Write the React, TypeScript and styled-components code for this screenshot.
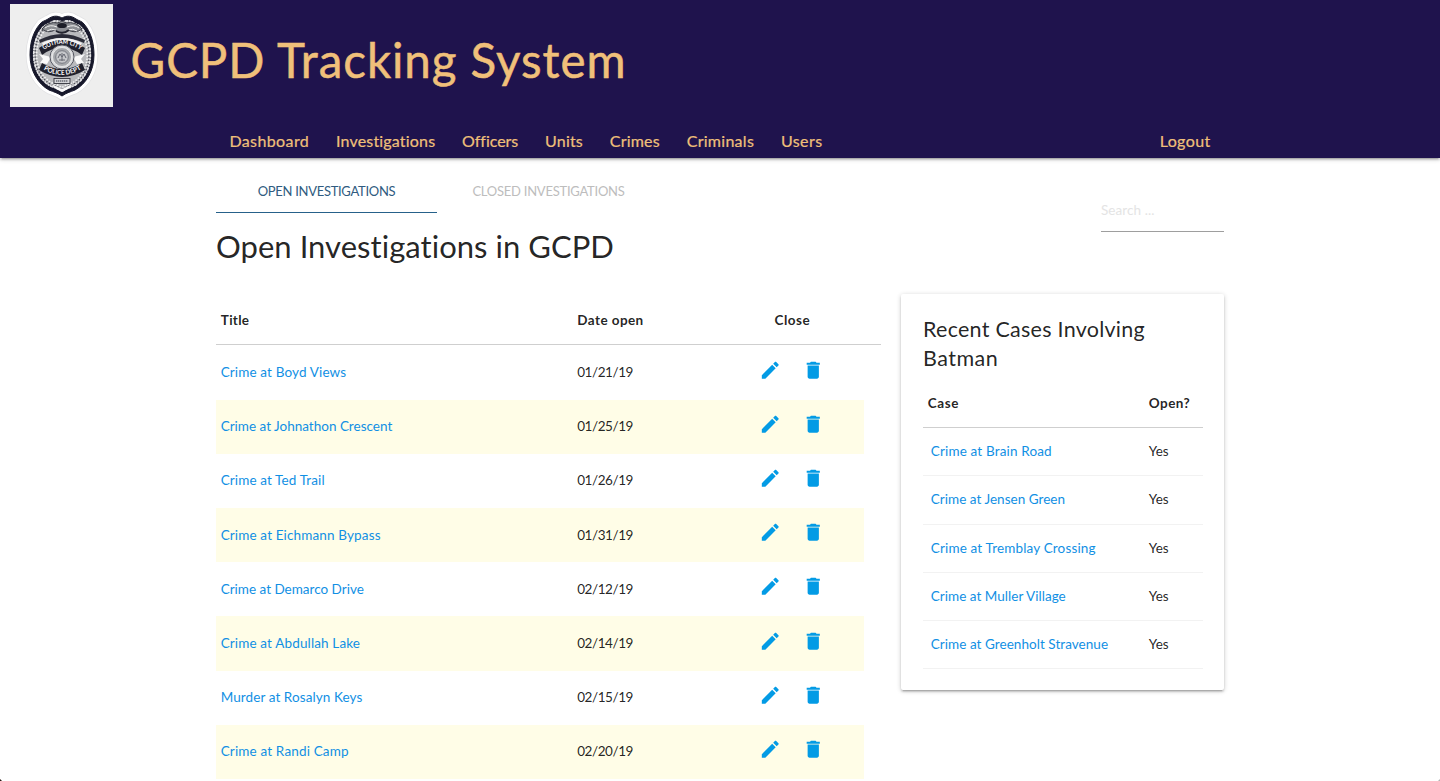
import React from 'react';
import styled, { createGlobalStyle } from 'styled-components';

const GlobalStyle = createGlobalStyle`
  *, *::before, *::after { box-sizing: border-box; }
  html, body { margin: 0; padding: 0; }
  body {
    height: 781px;
    overflow: hidden;
    background: #fff;
    color: rgba(0, 0, 0, 0.87);
    font-family: Lato, "Open Sans", sans-serif;
    font-size: 13.5px;
    line-height: 1.5;
  }
  a { text-decoration: none; }
  h1, h2, h3 { margin: 0; font-weight: 400; }
`;

const Page = styled.div`
  height: 781px;
  overflow: hidden;
`;

/* Header */

const Header = styled.header`
  height: 158px;
  display: flex;
  flex-direction: column;
  justify-content: space-between;
  background: #1f134d;
  color: #f0c07a;
  box-shadow: 0 2px 2px 0 rgba(0, 0, 0, 0.14), 0 3px 1px -2px rgba(0, 0, 0, 0.12),
    0 1px 5px 0 rgba(0, 0, 0, 0.2);
`;

const Brand = styled.div`
  display: flex;
  padding: 4px 0 0 10px;
`;

const Emblem = styled.svg`
  display: block;
  width: 103px;
  height: 103px;
  flex: none;
`;

const SiteTitle = styled.h1`
  margin: 21px 0 0 17.5px;
  font-size: 47.5px;
  line-height: 70px;
  letter-spacing: 0.95px;
  white-space: nowrap;
  -webkit-text-stroke: 0.5px currentColor;
`;

const Container = styled.div`
  width: 1008px;
  margin: 0 auto;
`;

const NavBar = styled(Container).attrs({ as: 'nav' })`
  display: flex;
  justify-content: space-between;
  height: 34px;
`;

const NavList = styled.div`
  display: flex;
`;

const NavLink = styled.a<{ $track: number }>`
  padding: 0 13.4px;
  color: inherit;
  font-size: 16px;
  line-height: 33px;
  letter-spacing: ${(p) => p.$track}px;
  -webkit-text-stroke: 0.2px currentColor;
`;

/* Heading area */

const TopArea = styled(Container)`
  display: flex;
  justify-content: space-between;
  height: 135px;
`;

const Tabs = styled.div`
  display: flex;
  height: 55px;
`;

const Tab = styled.a<{ $active?: boolean; $track: number }>`
  width: ${(p) => (p.$active ? 221 : 223)}px;
  padding-top: 12px;
  border-bottom: 1px solid ${(p) => (p.$active ? '#26618a' : 'transparent')};
  color: ${(p) => (p.$active ? '#2f5b80' : '#bdbdbd')};
  font-size: 13px;
  line-height: 42px;
  letter-spacing: ${(p) => p.$track}px;
  text-align: center;
`;

const PageTitle = styled.h2`
  margin-top: 10px;
  font-size: 31px;
  line-height: 46px;
  letter-spacing: 0.03px;
`;

const SearchField = styled.label`
  width: 123px;
  height: 74px;
  padding-top: 31px;
  border-bottom: 1px solid #9e9e9e;
`;

const SearchInput = styled.input`
  display: block;
  width: 100%;
  height: 42px;
  padding: 0;
  border: 0;
  outline: 0;
  background: transparent;
  font: 13.5px Lato, sans-serif;
  letter-spacing: 0.07px;
  &::placeholder { color: #e4e4e4; opacity: 1; }
`;

/* Investigations table */

const Content = styled(Container)`
  display: flex;
  align-items: flex-start;
  justify-content: space-between;
`;

const CaseTable = styled.section`
  width: 665px;
`;

const CaseHead = styled.div`
  display: grid;
  grid-template-columns: 356.5px 182px 1fr;
  height: 52px;
  padding-top: 3px;
  border-bottom: 1px solid #cfcfcf;
`;

const HeadCell = styled.div<{ $track: number; $indent?: number; $drop?: number }>`
  padding-top: ${(p) => p.$drop ?? 0}px;
  padding-left: ${(p) => p.$indent ?? 4.8}px;
  font-weight: 700;
  line-height: 49px;
  letter-spacing: ${(p) => p.$track}px;
`;

const CaseRows = styled.div`
  padding-top: 0.6px;
`;

const CaseRow = styled.div`
  display: grid;
  grid-template-columns: 356.5px 182px 1fr;
  width: 648px;
  height: 54.17px;
  line-height: 53px;
  &:nth-child(even) { background: #fffde7; }
`;

const Cell = styled.div<{ $indent?: number }>`
  padding-left: ${(p) => p.$indent ?? 4.7}px;
  ${CaseRow} > & { padding-top: 0.44px; }
`;

const DateCell = styled(Cell)`
  letter-spacing: -0.42px;
`;

const CaseLink = styled.a<{ $track: number }>`
  color: #1190e4;
  letter-spacing: ${(p) => p.$track + 0.03}px;
`;

const Actions = styled.div`
  display: flex;
  gap: 20px;
  padding: 13.15px 0 0 4.5px;
`;

const Icon = styled.svg`
  display: block;
  width: 22.5px;
  height: 22.5px;
  fill: #039be5;
`;

/* Recent cases card */

const Card = styled.aside`
  width: 323px;
  height: 396px;
  margin-top: 1px;
  padding: 21px 21px 0 22px;
  border-radius: 2px;
  background: #fff;
  box-shadow: 0 2px 2px 0 rgba(0, 0, 0, 0.14), 0 3px 1px -2px rgba(0, 0, 0, 0.12),
    0 1px 5px 0 rgba(0, 0, 0, 0.2);
`;

const CardTitle = styled.h3`
  font-size: 21.5px;
  line-height: 29px;
`;

const TitleLine = styled.span<{ $track: number }>`
  display: block;
  letter-spacing: ${(p) => p.$track}px;
`;

const RecentHead = styled.div`
  display: grid;
  grid-template-columns: 221px 1fr;
  height: 55px;
  border-bottom: 1px solid #cfcfcf;
`;

const RecentRow = styled.div`
  display: grid;
  grid-template-columns: 221px 1fr;
  height: 48.25px;
  border-bottom: 1px solid #f2f2f2;
  line-height: 47px;
`;

const WindowCorner = styled.span<{ $right?: boolean }>`
  position: absolute;
  top: 778px;
  ${(p) => (p.$right ? 'right: 0;' : 'left: 0;')}
  width: 3px;
  height: 3px;
  background: radial-gradient(
    circle at ${(p) => (p.$right ? '0 0' : '100% 0')},
    transparent 2.6px,
    ${(p) => (p.$right ? '#b5b5b5' : '#2a1712')} 3.2px
  );
`;

const navItems = [
  { label: 'Dashboard', track: 0.4 },
  { label: 'Investigations', track: 0.176 },
  { label: 'Officers', track: -0.03 },
  { label: 'Units', track: 0.2 },
  { label: 'Crimes', track: 0.22 },
  { label: 'Criminals', track: 0.275 },
  { label: 'Users', track: 0.45 },
];

const investigations = [
  { title: 'Crime at Boyd Views', date: '01/21/19', track: 0.11 },
  { title: 'Crime at Johnathon Crescent', date: '01/25/19', track: -0.028 },
  { title: 'Crime at Ted Trail', date: '01/26/19', track: 0.091 },
  { title: 'Crime at Eichmann Bypass', date: '01/31/19', track: 0.113 },
  { title: 'Crime at Demarco Drive', date: '02/12/19', track: -0.03 },
  { title: 'Crime at Abdullah Lake', date: '02/14/19', track: 0.11 },
  { title: 'Murder at Rosalyn Keys', date: '02/15/19', track: 0.06 },
  { title: 'Crime at Randi Camp', date: '02/20/19', track: 0.13 },
];

const recentCases = [
  { title: 'Crime at Brain Road', track: 0.13 },
  { title: 'Crime at Jensen Green', track: 0 },
  { title: 'Crime at Tremblay Crossing', track: 0.127 },
  { title: 'Crime at Muller Village', track: 0 },
  { title: 'Crime at Greenholt Stravenue', track: 0.02 },
];

const EditIcon = () => (
  <Icon viewBox="0 0 24 24">
    <path d="M3 17.25V21h3.75L17.81 9.94l-3.75-3.75L3 17.25zM20.71 7.04c.39-.39.39-1.02 0-1.41l-2.34-2.34c-.39-.39-1.02-.39-1.41 0l-1.83 1.83 3.75 3.75 1.83-1.83z" />
  </Icon>
);

const DeleteIcon = () => (
  <Icon viewBox="0 0 24 24">
    <path d="M6 19c0 1.1.9 2 2 2h8c1.1 0 2-.9 2-2V7H6v12zM19 4h-3.5l-1-1h-5l-1 1H5v2h14V4z" />
  </Icon>
);

const shield =
  'M53 14C48 11 43 12 39 15C36 17 33 17 31 20C24 28 21 39 21 51C21 67 29 80 40 86C45 88 49 89 53 92C57 89 61 88 66 86C77 80 85 67 85 51C85 39 82 28 75 20C73 17 70 17 67 15C63 12 58 11 53 14Z';

const Badge = () => (
  <Emblem viewBox="0 0 103 103" role="img" aria-label="Gotham City Police Dept badge">
    <defs>
      <path id="arcTop" d="M33 46.5Q52 33 71 46.5" />
      <path id="arcBottom" d="M32.5 65Q52 77 71.5 65" />
    </defs>
    <rect width="103" height="103" fill="#eeeeee" />
    <g transform="translate(-1 0)">
      <path d={shield} fill="#e2e2e4" stroke="#e2e2e4" strokeWidth="8.5" strokeLinejoin="round" />
      <path d={shield} fill="#fff" stroke="#fff" strokeWidth="7" strokeLinejoin="round" />
      <path d={shield} fill="#17182b" stroke="#17182b" strokeWidth="1" />
      <path d={shield} transform="translate(5.3 5.2) scale(.9)" fill="#b9babd" />
      <path
        d={shield}
        transform="translate(6.4 6.2) scale(.88)"
        fill="none"
        stroke="#e6e6e8"
        strokeWidth="2.2"
        strokeDasharray="3.4 1.1 1.8 1.3"
      />
      <path
        d={shield}
        transform="translate(8.5 8.3) scale(.84)"
        fill="none"
        stroke="#50515a"
        strokeWidth="1.8"
        strokeDasharray="1.5 2.2"
      />
      <path
        d={shield}
        transform="translate(11.1 10.9) scale(.79)"
        fill="none"
        stroke="#f3f3f3"
        strokeWidth="2"
        strokeDasharray="2 1.8"
      />
      {/* eagle */}
      <path d="M33 25Q39 17 49 19L53 17L57 19Q67 17 73 25Q66 30 59 26Q53 32 46 26Q39 30 33 25Z" fill="#8d8f94" stroke="#33343d" strokeWidth=".9" />
      <path d="M36 24Q41 20 48 23M70 24Q65 20 58 23M38 27Q42 24 47 26M68 27Q64 24 59 26" fill="none" stroke="#eee" strokeWidth="1" />
      <ellipse cx="53" cy="21.5" rx="4.8" ry="2.6" fill="#1c1d27" />
      <path d="M47 27Q54 31 60 26" fill="none" stroke="#24252f" strokeWidth="1.8" />
      {/* ribbon under the eagle */}
      <path d="M30 36Q53 24 76 36L75 39Q53 29 31 39Z" fill="#2b2c38" />
      <path d="M33 39Q53 29 73 39L71 42Q53 34 35 42Z" fill="#f3f3f3" />
      {/* banners */}
      <path d="M30 44Q53 28 76 44L73 51Q53 36 33 51Z" fill="#20212d" />
      <path d="M30 50L42 53L38 60L31 59L34 55Z M76 50L64 53L68 60L75 59L72 55Z" fill="#fafafa" />
      <path d="M33 59Q53 71 73 59L76 66Q53 80 30 66Z" fill="#20212d" />
      {/* seal */}
      <circle cx="53" cy="53" r="12" fill="#d9dadc" stroke="#555761" strokeWidth="1" />
      <circle cx="53" cy="53" r="9.5" fill="#a5a7ab" stroke="#f2f2f2" strokeWidth=".8" />
      <circle cx="53" cy="53" r="6.3" fill="#c6c7ca" stroke="#777982" strokeWidth="1" />
      <path d="M49 54L51 50L53 53L55 50L57 54M50 56H56M53 49V57" fill="none" stroke="#666872" strokeWidth="1" />
      <rect x="45" y="74.5" width="16" height="5" fill="#d4d5d8" stroke="#33343d" strokeWidth=".9" />
      <path d="M47 77H59" stroke="#666872" strokeWidth="1.6" strokeDasharray="1.4 .6" />
      <path d="M42 80L53 85L64 80L59 85L53 88L47 85Z" fill="#fafafa" />
    </g>
    <text fill="#fff" fontFamily="Lato, sans-serif" fontWeight="700" fontSize="6.6">
      <textPath href="#arcTop" startOffset="1" textLength="39" lengthAdjust="spacingAndGlyphs">GOTHAM CITY</textPath>
    </text>
    <text fill="#fff" fontFamily="Lato, sans-serif" fontWeight="700" fontSize="6.6">
      <textPath href="#arcBottom" startOffset="1" textLength="40" lengthAdjust="spacingAndGlyphs">POLICE DEPT</textPath>
    </text>
  </Emblem>
);

export default function App() {
  return (
    <Page>
      <GlobalStyle />
      <Header>
        <Brand>
          <Badge />
          <SiteTitle>GCPD Tracking System</SiteTitle>
        </Brand>
        <NavBar>
          <NavList>
            {navItems.map((item) => (
              <NavLink key={item.label} href="#" $track={item.track}>{item.label}</NavLink>
            ))}
          </NavList>
          <NavLink href="#" $track={0.391}>Logout</NavLink>
        </NavBar>
      </Header>

      <TopArea>
        <div>
          <Tabs>
            <Tab href="#" $active $track={-0.3}>OPEN INVESTIGATIONS</Tab>
            <Tab href="#" $track={-0.25}>CLOSED INVESTIGATIONS</Tab>
          </Tabs>
          <PageTitle>Open Investigations in GCPD</PageTitle>
        </div>
        <SearchField>
          <SearchInput placeholder="Search ..." />
        </SearchField>
      </TopArea>

      <Content>
        <CaseTable>
          <CaseHead>
            <HeadCell $track={0.289}>Title</HeadCell>
            <HeadCell $track={0.42}>Date open</HeadCell>
            <HeadCell $track={0.506} $indent={20}>Close</HeadCell>
          </CaseHead>
          <CaseRows>
            {investigations.map((c) => (
              <CaseRow key={c.title}>
                <Cell><CaseLink href="#" $track={c.track}>{c.title}</CaseLink></Cell>
                <DateCell>{c.date}</DateCell>
                <Actions>
                  <EditIcon />
                  <DeleteIcon />
                </Actions>
              </CaseRow>
            ))}
          </CaseRows>
        </CaseTable>

        <Card>
          <CardTitle>
            <TitleLine $track={0.26}>Recent Cases Involving</TitleLine>
            <TitleLine $track={0.47}>Batman</TitleLine>
          </CardTitle>
          <RecentHead>
            <HeadCell $track={0.6} $drop={6}>Case</HeadCell>
            <HeadCell $track={0.435} $drop={6}>Open?</HeadCell>
          </RecentHead>
          {recentCases.map((c) => (
            <RecentRow key={c.title}>
              <Cell $indent={7.8}><CaseLink href="#" $track={c.track}>{c.title}</CaseLink></Cell>
              <Cell>Yes</Cell>
            </RecentRow>
          ))}
        </Card>
      </Content>
      <WindowCorner />
      <WindowCorner $right />
    </Page>
  );
}
